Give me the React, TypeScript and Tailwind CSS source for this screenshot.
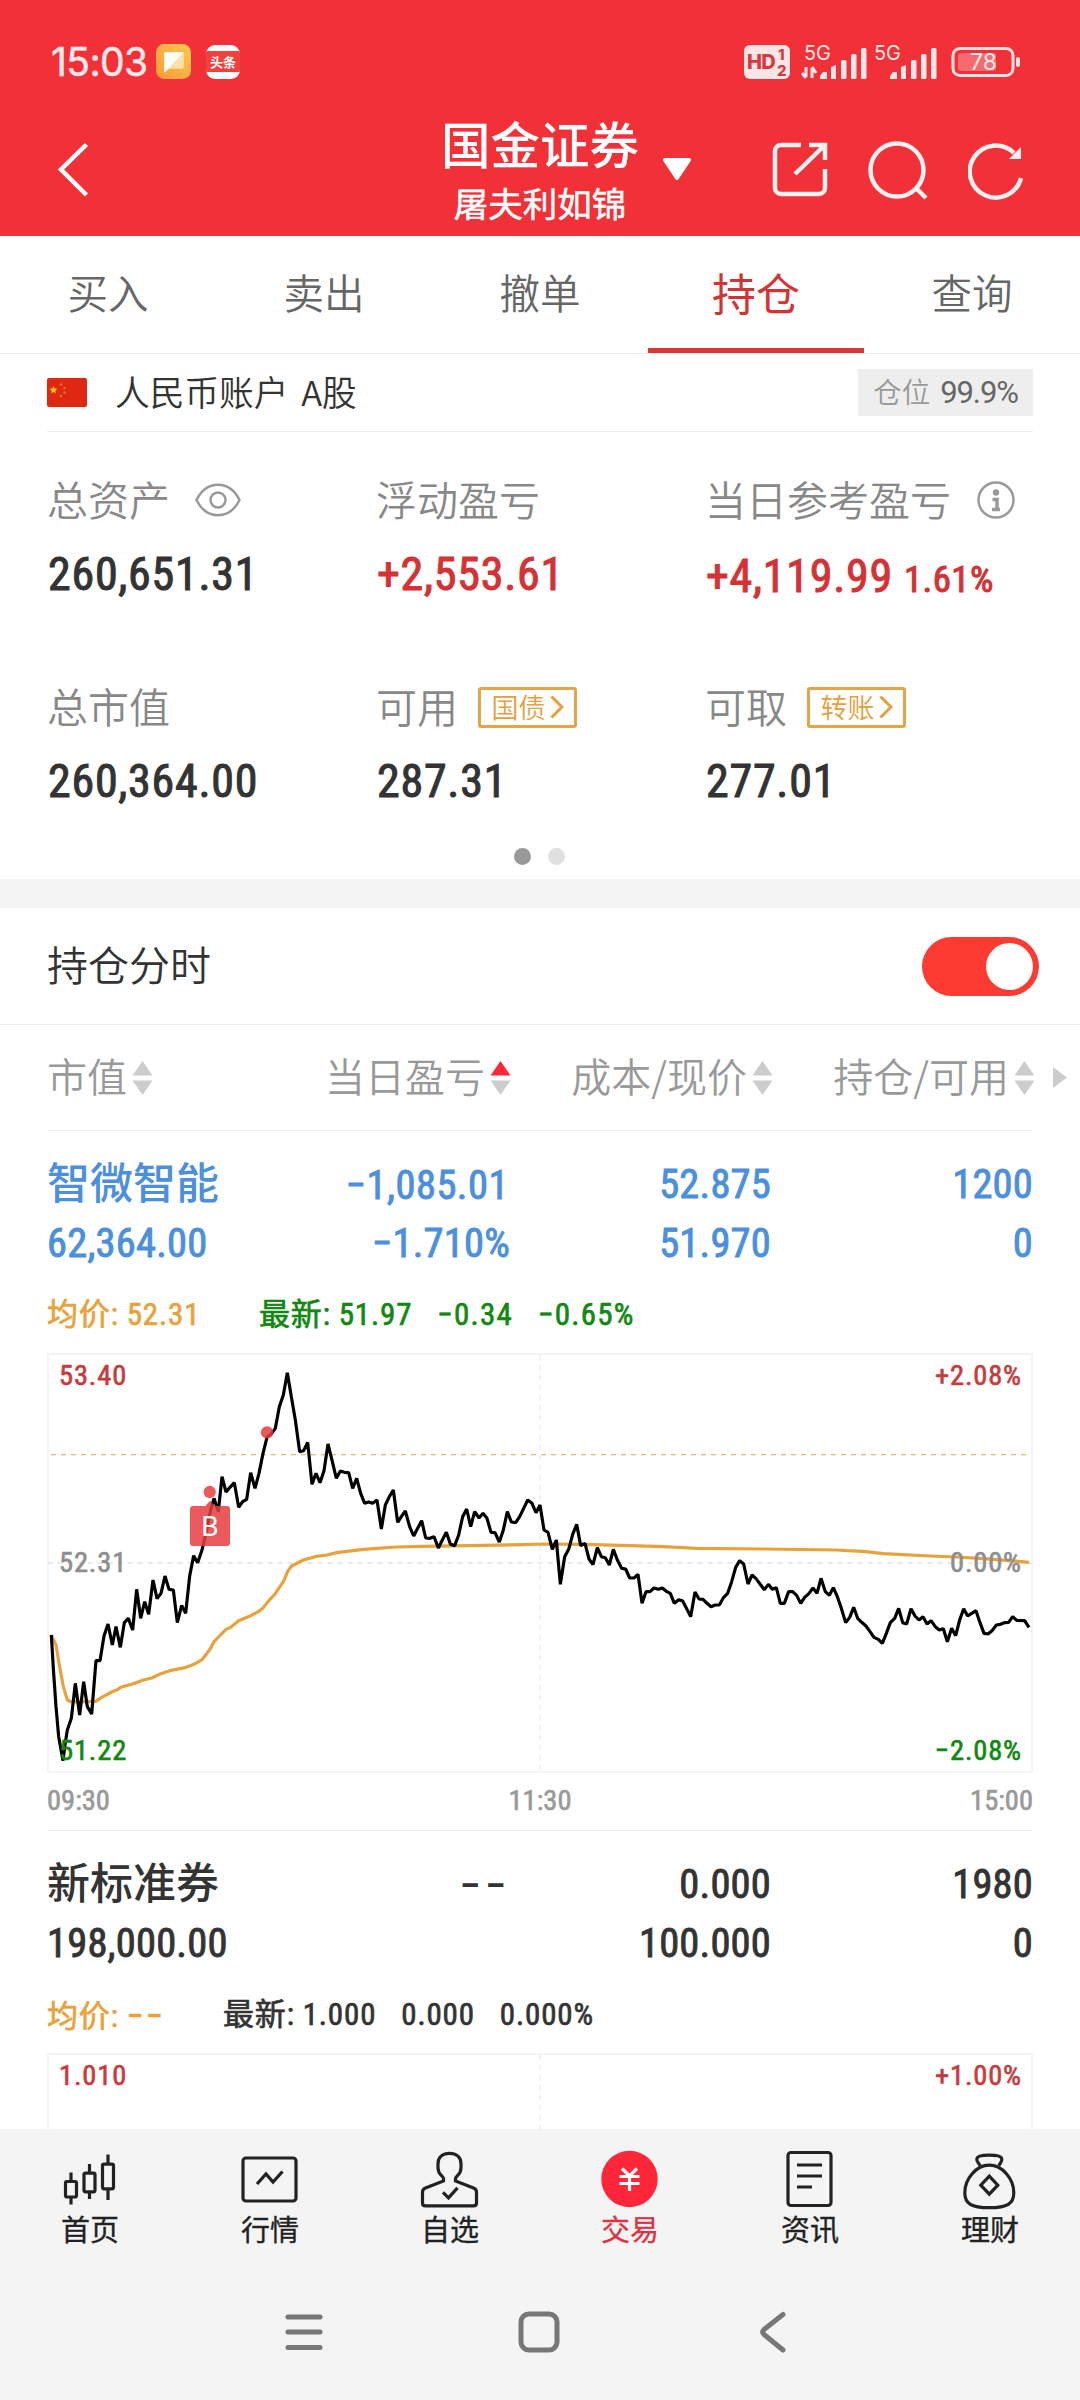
import type { ReactNode } from "react";
import { clsx } from "clsx";

const TABS = ["买入", "卖出", "撤单", "持仓", "查询"];

// chart coordinates share one space: x 51..3009, y 39..1299
const PRICE_LINE =
  "64,885 70,985 78,1100 86,1190 99,1262 105,1215 112,1170 124,1135 136,1030 149,1125 161,1025 172,1100 185,1122 198,962 210,962 222,888 234,852 247,915 258,860 271,922 283,848 295,835 308,870 320,748 332,835 344,785 356,823 369,720 381,776 393,760 405,708 417,748 430,750 442,848 455,796 467,820 479,708 491,647 503,668 516,630 530,570 542,510 552,475 565,515 576,410 588,456 600,442 613,428 626,502 638,485 650,478 662,398 675,445 687,400 699,340 711,292 723,283 736,265 748,200 760,165 772,98 784,170 796,240 809,335 821,332 833,307 846,433 858,400 870,428 882,392 894,312 907,365 919,415 931,393 943,397 956,398 968,445 980,415 992,460 1004,490 1016,486 1028,490 1041,480 1054,567 1066,495 1078,470 1090,450 1103,547 1114,530 1126,513 1139,560 1151,588 1163,565 1175,542 1187,594 1200,595 1212,590 1225,624 1237,600 1249,577 1261,612 1274,617 1286,585 1298,530 1310,507 1322,560 1334,515 1347,534 1359,520 1371,535 1383,577 1395,578 1408,606 1420,570 1432,515 1444,546 1457,548 1469,530 1481,505 1493,480 1506,490 1518,518 1530,495 1542,570 1554,577 1567,628 1579,600 1591,733 1604,650 1616,628 1628,583 1640,553 1652,617 1665,610 1677,657 1689,674 1702,623 1714,650 1726,653 1738,675 1750,628 1762,660 1775,685 1787,687 1799,714 1812,714 1824,703 1836,790 1848,755 1860,755 1872,744 1885,748 1897,744 1909,754 1921,760 1933,790 1946,779 1958,783 1970,806 1982,830 1995,756 2007,777 2019,778 2031,790 2043,800 2056,795 2068,795 2081,772 2093,760 2105,725 2117,682 2129,662 2141,672 2154,732 2166,705 2178,716 2190,732 2203,749 2215,733 2227,748 2239,743 2251,790 2263,790 2276,755 2288,755 2300,766 2312,790 2324,772 2337,760 2349,744 2361,760 2373,715 2386,755 2398,766 2410,743 2422,770 2434,805 2447,848 2459,832 2471,802 2483,835 2495,847 2508,858 2520,875 2532,892 2545,898 2557,910 2569,880 2581,848 2594,835 2606,805 2618,848 2630,852 2643,806 2655,828 2667,840 2679,830 2691,852 2703,842 2716,860 2728,870 2740,866 2752,905 2765,865 2777,887 2789,840 2801,806 2813,828 2825,820 2838,812 2850,848 2862,880 2874,882 2886,872 2899,855 2911,853 2923,848 2936,847 2948,830 2960,841 2984,842 2997,862";

const AVERAGE_LINE =
  "64,885 78,915 88,975 100,1040 112,1080 125,1086 197,1084 215,1072 245,1056 262,1049 272,1042 310,1031 340,1020 365,1014 388,1003 420,992 468,982 492,973 516,959 540,928 552,905 588,868 602,862 626,842 660,828 688,813 700,803 712,787 735,762 748,743 762,722 773,694 785,678 820,660 855,650 890,645 920,638 1000,628 1041,625 1100,621 1180,619 1360,616 1480,614 1540,612 1660,613 1800,617 1900,620 2000,625 2200,627 2420,630 2450,632 2500,634 2560,641 2700,648 2780,651 2860,656 2940,662 2997,667";

function Num({ className, children }: { className?: string; children: ReactNode }) {
  return (
    <span
      className={clsx(
        "font-[Roboto,'Noto_Sans_CJK_SC',sans-serif] whitespace-pre font-stretch-[75%] [-webkit-text-stroke:0.022em_currentColor]",
        className,
      )}
    >
      {children}
    </span>
  );
}

function Dashes() {
  return <span className="font-[Inter,sans-serif] text-[1.18em] leading-none tracking-[0.07em]">--</span>;
}

function SignalBars({ x }: { x: number }) {
  return (
    <g fill="#ffe6e6">
      <path d={`M${x} 35v-3l3-4h4v7z`} />
      <path d={`M${x + 11} 35V23l5-2v14z`} />
      <rect x={x + 21} y="16" width="5.5" height="19" rx="1.5" />
      <rect x={x + 31} y="10" width="5.5" height="25" rx="1.5" />
      <rect x={x + 41} y="4" width="5.5" height="31" rx="1.5" />
    </g>
  );
}

function StatusBar() {
  return (
    <div className="flex h-[122px] items-center pt-px pr-[59px] pl-[51px]">
      <span className="w-[101px] font-[Inter,sans-serif] text-[39px] leading-none tracking-[-0.015em] whitespace-nowrap text-[#ffe9e9] [-webkit-text-stroke:0.5px_#ffe9e9]">
        15:03
      </span>
      <svg className="ml-1 size-[35px]" viewBox="0 0 34 34">
        <defs>
          <linearGradient id="note" x1="1" y1="0" x2="0" y2="1">
            <stop offset="0" stopColor="#ffc84d" />
            <stop offset="1" stopColor="#fb9a38" />
          </linearGradient>
        </defs>
        <rect width="34" height="34" rx="8" fill="url(#note)" />
        <path d="M9 8h17a1 1 0 0 1 1 1v13a2 2 0 0 1-2 2H13l-5 4V9a1 1 0 0 1 1-1z" fill="#ffe0a8" />
        <path d="M9 8h18L8 28V9a1 1 0 0 1 1-1z" fill="#fff" />
      </svg>
      <div className="ml-[15px] flex h-[34px] w-[34px] items-center overflow-hidden rounded-[9px] bg-white">
        <span className="flex h-[21px] w-full items-center justify-center bg-[#f4403c] pb-px text-[13px] leading-none font-bold text-white">
          头条
        </span>
      </div>

      <svg className="ml-auto h-[36px] w-[280px] overflow-visible" viewBox="0 0 280 36">
        <rect x="3" y="1" width="46" height="34" rx="6" fill="#ffe6e6" />
        <g fill="#d9383e" fontFamily="Inter, sans-serif" fontWeight="800">
          <text x="6" y="25" fontSize="20" letterSpacing="-0.8">HD</text>
          <text x="37" y="16" fontSize="15">1</text>
          <text x="36" y="32" fontSize="15">2</text>
        </g>
        <g fill="#ffe6e6" fontFamily="Inter, sans-serif" fontWeight="400" fontSize="20">
          <text x="63" y="16" textLength="27" lengthAdjust="spacingAndGlyphs">5G</text>
          <text x="133" y="16" textLength="27" lengthAdjust="spacingAndGlyphs">5G</text>
        </g>
        <path d="M65 23v10M65 34l-4-5M71 34V24M71 23l4 6" stroke="#ffe6e6" strokeWidth="3" fill="none" />
        <SignalBars x={79} />
        <SignalBars x={149} />
        <rect x="212" y="4.500" width="60" height="27" rx="7" fill="none" stroke="#ffe0e0" strokeWidth="3" />
        <rect x="217" y="9" width="38" height="18" rx="3" fill="#f76a6e" />
        <rect x="275" y="13" width="4" height="10" rx="2" fill="#ffe6e6" />
        <text x="242.500" y="26" textAnchor="middle" fill="#ffeaea" fontFamily="Inter, sans-serif" fontWeight="400" fontSize="23">78</text>
      </svg>
    </div>
  );
}

function Header() {
  return (
    <header className="h-[236px] bg-[#f23038] text-white">
      <StatusBar />
      <div className="grid h-[114px] grid-cols-[1fr_200px_1fr]">
        <svg className="mt-[20px] ml-[54px] h-[56px] w-[38px]" viewBox="0 0 38 56" fill="none" stroke="#fff" strokeWidth="4.500">
          <path d="M32.500 2.500L7 27.500L32.500 53" />
        </svg>
        <div className="flex flex-col items-center font-medium">
          <span className="-mt-[4px] text-[49.500px] leading-[50px] whitespace-nowrap">国金证券</span>
          <span className="mt-[12px] text-[34.500px] leading-[45px] font-normal whitespace-nowrap [-webkit-text-stroke:0.5px_white]">屠夫利如锦</span>
        </div>
        <div className="flex pt-[20px] pl-[21px]">
          <svg className="mt-[14px] h-[27px] w-[32px]" viewBox="0 0 32 27">
            <path d="M4 4H28L16 22Z" fill="#fff" stroke="#fff" strokeWidth="4" strokeLinejoin="round" />
          </svg>
          <svg className="ml-[79px] h-[56px] w-[56px]" viewBox="0 0 56 56" fill="none" stroke="#fff0f0" strokeWidth="4.500">
            <path d="M29 3H9a6 6 0 0 0-6 6V46a6 6 0 0 0 6 6H47a6 6 0 0 0 6-6V27" />
            <path d="M37 3H53V18M53 3L23 32" />
          </svg>
          <svg className="-mt-[3px] ml-[40px] h-[62px] w-[62px]" viewBox="0 0 62 62" fill="none" stroke="#fff0f0" strokeWidth="4.500">
            <ellipse cx="29" cy="31" rx="26.500" ry="26.500" />
            <path d="M48 49l10 10" />
          </svg>
          <svg className="-mt-px ml-[38px] h-[60px] w-[58px]" viewBox="0 0 58 60" fill="none" stroke="#fff0f0" strokeWidth="4.500">
            <path d="M53 37A26 26 0 1 1 46 12" />
            <path d="M53 6V18H41Z" fill="#fff0f0" stroke="none" />
          </svg>
        </div>
      </div>
    </header>
  );
}

function SortArrows({ active }: { active?: boolean }) {
  return (
    <svg className="mt-[5px] ml-[5px] h-[34px] w-[21px] shrink-0" viewBox="0 0 21 34">
      <path d="M0.500 14.500L10.500 0L20.500 14.500Z" fill={active ? "#fe2638" : "#ccc"} />
      <path d="M0.500 19.500L10.500 34L20.500 19.500Z" fill="#ccc" />
    </svg>
  );
}

function Stat({ label, extra, children }: { label: string; extra?: ReactNode; children: ReactNode }) {
  return (
    <div className="h-[207px] w-[329px] shrink-0">
      <div className="flex h-[60px] items-center">
        <span className="pb-[4px] text-[41px] leading-none font-[350] whitespace-nowrap text-[#888]">{label}</span>
        {extra}
      </div>
      <div className="flex h-[88px] items-center pl-px text-[46px] leading-none tracking-[0.016em] whitespace-nowrap">{children}</div>
    </div>
  );
}

function Tag({ children }: { children: string }) {
  return (
    <span className="ml-[20px] flex h-[41px] w-[99px] items-center justify-center gap-1 rounded-[3px] border-[3px] border-[#e3a548] text-[27px] leading-none font-[350] text-[#e3a03c]">
      <span className="pb-[2px]">{children}</span>
      <svg className="h-[24px] w-[14px]" viewBox="0 0 14 24" fill="none" stroke="currentColor" strokeWidth="3">
        <path d="M1.500 1.500L12 12L1.500 22.500" />
      </svg>
    </span>
  );
}

function AccountSummary() {
  return (
    <section className="h-[525px]">
      <div className="mx-[47px] flex h-[78px] items-center border-b border-[#ececec]">
        <svg className="h-[29px] w-[40px]" viewBox="0 0 40 29">
          <rect width="40" height="29" rx="2" fill="#de2812" />
          <path d="M6.500 8l1.100 2.600 2.900.2-2.200 1.900.7 2.800-2.500-1.500-2.500 1.500.7-2.800-2.200-1.900 2.900-.2z" fill="#ffc81e" />
          <g fill="#e87828">
            <circle cx="14" cy="6.500" r="1.200" />
            <circle cx="17.500" cy="10" r="1.200" />
            <circle cx="17.500" cy="14.500" r="1.200" />
            <circle cx="14" cy="18" r="1.200" />
          </g>
        </svg>
        <span className="ml-[28px] pb-[3px] text-[34.700px] leading-none font-[350] whitespace-pre text-[#333] [word-spacing:5px]">人民币账户 A股</span>
        <div className="ml-auto flex h-[47px] w-[175px] items-center justify-center gap-[10px] bg-[#eee] text-[28.500px] leading-none font-[350] text-[#999]">
          <span className="pb-[3px]">仓位</span>
          <span className="font-[Roboto,sans-serif] text-[31px] font-normal tracking-[-0.035em] text-[#666]">99.9%</span>
        </div>
      </div>

      <div className="flex flex-wrap pt-[38px] pl-[47px]">
        <Stat
          label="总资产"
          extra={
            <svg className="ml-[25px] h-[34px] w-[46px]" viewBox="0 0 46 34" fill="none" stroke="#999" strokeWidth="2.500">
              <path d="M1.500 17C6 8 13 1.800 23 1.800S40 8 44.500 17C40 26 33 32.200 23 32.200S6 26 1.500 17Z" />
              <circle cx="23" cy="17" r="7.500" />
            </svg>
          }
        >
          <Num className="text-[#333]">260,651.31</Num>
        </Stat>
        <Stat label="浮动盈亏">
          <Num className="text-[#d43235]">+2,553.61</Num>
        </Stat>
        <Stat
          label="当日参考盈亏"
          extra={
            <svg className="ml-[26px] size-[38px] shrink-0" viewBox="0 0 38 38" fill="none" stroke="#999">
              <circle cx="19" cy="19" r="17.500" strokeWidth="2.500" />
              <circle cx="19" cy="11.500" r="3.200" fill="#999" stroke="none" />
              <path d="M15.500 18.500H20V28M15 28.500H23" strokeWidth="3.500" />
            </svg>
          }
        >
          <Num className="pt-1 text-[#d43235]">
            +4,119.99<span className="ml-[11px] text-[37px] tracking-[0.01em]">1.61%</span>
          </Num>
        </Stat>
        <Stat label="总市值">
          <Num className="text-[#333]">260,364.00</Num>
        </Stat>
        <Stat label="可用" extra={<Tag>国债</Tag>}>
          <Num className="text-[#333]">287.31</Num>
        </Stat>
        <Stat label="可取" extra={<Tag>转账</Tag>}>
          <Num className="text-[#333]">277.01</Num>
        </Stat>
      </div>

      <div className="-mt-[36px] flex justify-center gap-[17px] pr-px">
        <span className="size-[17px] rounded-full bg-[#999]" />
        <span className="size-[17px] rounded-full bg-[#e0e0e0]" />
      </div>
    </section>
  );
}

function TableHeader() {
  return (
    <div className="flex h-[105px] items-center pr-3 pb-[5px] pl-[47px] text-[40px] leading-none font-[350] text-[#999]">
      <div className="flex w-[150px] items-center">
        市值
        <SortArrows />
      </div>
      <div className="flex w-[314px] items-center justify-end">
        当日盈亏
        <SortArrows active />
      </div>
      <div className="flex w-[262px] items-center justify-end whitespace-nowrap">
        成本/现价
        <SortArrows />
      </div>
      <div className="flex w-[262px] items-center justify-end whitespace-nowrap">
        持仓/可用
        <SortArrows />
      </div>
      <svg className="mt-[5px] ml-[18px] h-[21px] w-[14px] shrink-0" viewBox="0 0 14 21">
        <path d="M0 0L14 10.500L0 21Z" fill="#ccc" />
      </svg>
    </div>
  );
}

interface Holding {
  name: string;
  value: string;
  pnl: [string, string];
  cost: [string, string];
  amount: [string, string];
  color: string;
}

function HoldingRow({ name, value, pnl, cost, amount, color }: Holding) {
  return (
    <div
      className={clsx(
        "grid h-[150px] grid-cols-[201px_262px_261px_262px] grid-rows-[60px_58px] pt-[23px] text-[40.500px] leading-none tracking-[0.005em] whitespace-nowrap",
        color,
      )}
    >
      <span className="self-center pb-[7px] text-[43px] font-medium tracking-normal">{name}</span>
      <span className="self-center text-right">
        {pnl[0] === "--" ? <Dashes /> : <Num className="mr-px tracking-[0.012em]">{pnl[0]}</Num>}
      </span>
      <Num className="self-center text-right">{cost[0]}</Num>
      <Num className="self-center text-right">{amount[0]}</Num>
      <Num className="self-center">{value}</Num>
      <Num className="self-center text-right">{pnl[1]}</Num>
      <Num className="self-center text-right">{cost[1]}</Num>
      <Num className="self-center text-right">{amount[1]}</Num>
    </div>
  );
}

function ChartFrame({ high, highPct, children }: { high: string; highPct: string; children?: ReactNode }) {
  return (
    <div className="relative h-[421px] text-[28.500px] leading-none tracking-[0.03em]">
      <svg className="absolute inset-0 h-[421px] w-[986px]" viewBox="51 39 2958 1263" fill="none">
        <rect x="54" y="42" width="2952" height="1254" stroke="#f3f3f3" strokeWidth="5" />
        <path d="M1530 45V1292" stroke="#f0f0f0" strokeWidth="5" strokeDasharray="15 15" />
        <path d="M53 669H3004" stroke="#e2e2e2" strokeWidth="5" strokeDasharray="15 15" />
        {children}
      </svg>
      <div className="relative flex justify-between px-[12px] pt-[9px] pr-[11px] text-[#c63c3c]">
        <Num>{high}</Num>
        <Num>{highPct}</Num>
      </div>
    </div>
  );
}

function IntradayChart() {
  return (
    <div className="relative">
      <ChartFrame high="53.40" highPct="+2.08%">
        <path d="M63 344H2997" stroke="#e0b878" strokeWidth="3.500" strokeDasharray="15 15" />
        <polyline points={AVERAGE_LINE} stroke="#e8a23c" strokeWidth="9.500" strokeLinejoin="round" />
        <polyline points={PRICE_LINE} stroke="#000" strokeWidth="9.500" strokeLinejoin="bevel" />
        <g fill="#e63c3f" fillOpacity="0.85">
          <circle cx="539" cy="456" r="18.500" />
          <circle cx="711" cy="277" r="18.500" />
          <path d="M526 498L540 482L554 498Z" />
          <rect x="480" y="498" width="120" height="120" rx="9" />
        </g>
        <text x="540" y="588" textAnchor="middle" fill="#fff" fontFamily="Roboto, sans-serif" fontSize="84" letterSpacing="0">B</text>
      </ChartFrame>
      <div className="absolute top-[196px] right-[11px] left-[12px] flex justify-between text-[28.500px] leading-none tracking-[0.03em] text-[#8e8e8e]">
        <Num>52.31</Num>
        <Num>0.00%</Num>
      </div>
      <div className="absolute top-[384px] right-[11px] left-[12px] flex justify-between text-[28.500px] leading-none tracking-[0.03em] text-[#118811]">
        <Num>51.22</Num>
        <Num>−2.08%</Num>
      </div>
    </div>
  );
}

function Holdings() {
  return (
    <section className="px-[47px]">
      <div className="h-[700px] border-t border-[#ececec]">
        <HoldingRow
          name="智微智能"
          value="62,364.00"
          pnl={["−1,085.01", "−1.710%"]}
          cost={["52.875", "51.970"]}
          amount={["1200", "0"]}
          color="text-[#4c8fdc]"
        />
        <div className="flex h-[72px] items-center pb-[6px] text-[31px] leading-none tracking-[0.027em] whitespace-nowrap">
          <Num className="w-[212px] text-[#e8a23c]">均价: 52.31</Num>
          <div className="flex gap-[25px] text-[#118811]">
            <Num>最新: 51.97</Num>
            <Num className="tracking-[0.04em]">−0.34</Num>
            <Num className="tracking-[0.04em]">−0.65%</Num>
          </div>
        </div>
        <IntradayChart />
        <div className="flex h-[54px] items-center justify-between text-[28.500px] leading-none text-[#999]">
          <Num>09:30</Num>
          <Num>11:30</Num>
          <Num>15:00</Num>
        </div>
      </div>

      <div className="border-t border-[#ececec]">
        <HoldingRow
          name="新标准券"
          value="198,000.00"
          pnl={["--", ""]}
          cost={["0.000", "100.000"]}
          amount={["1980", "0"]}
          color="text-[#333]"
        />
        <div className="flex h-[72px] items-center pb-[6px] text-[31px] leading-none tracking-[0.027em] whitespace-nowrap text-[#333]">
          <Num className="w-[176px] text-[#e8a23c]">
            均价: <Dashes />
          </Num>
          <div className="flex gap-[25px]">
            <Num>最新: 1.000</Num>
            <Num>0.000</Num>
            <Num>0.000%</Num>
          </div>
        </div>
        <ChartFrame high="1.010" highPct="+1.00%" />
      </div>
    </section>
  );
}

const NAV_ITEMS: { label: string; active?: boolean; icon: ReactNode }[] = [
  {
    label: "首页",
    icon: (
      <>
        <rect x="5.500" y="31.500" width="11" height="15.500" rx="1.500" />
        <rect x="24" y="23.200" width="11" height="18.600" rx="1.500" />
        <rect x="42.500" y="14.200" width="11" height="24.600" rx="1.500" />
        <path d="M11 22.500V31M11 47V54.500M29.500 14V23M29.500 42V49M48 4.500V14M48 39V50" />
      </>
    ),
  },
  {
    label: "行情",
    icon: (
      <>
        <rect x="3" y="8" width="53" height="43" rx="3" />
        <path d="M17 34L26 24L33 32L42.500 21.500" />
      </>
    ),
  },
  {
    label: "自选",
    icon: (
      <g transform="translate(-0.5 0.9)">
        <path d="M24 27.500C24 25 18.500 24 18.500 17V13C18.500 6 23.500 2.500 30 2.500S41.500 6 41.500 13V17C41.500 24 36 25 36 27.500V30L54 37C56 38 57 39 57 41V52C57 54 56 55 54 55H6C4 55 3 54 3 52V41C3 39 4 38 6 37L24 30Z" />
        <path d="M23.500 41.500L29 47L38 37" />
      </g>
    ),
  },
  {
    label: "交易",
    active: true,
    icon: (
      <>
        <circle cx="29.500" cy="29" r="28.200" fill="#fe2638" stroke="none" />
        <path d="M22 18.500L29.500 26L37 18.500M19.500 26.500H39.500M19.500 33.500H39.500M29.500 26V41" stroke="#fff" strokeWidth="3.200" />
      </>
    ),
  },
  {
    label: "资讯",
    icon: (
      <>
        <rect x="8" y="2.500" width="43" height="53" rx="3" />
        <path d="M17 15H42M17 26H42M17 37H32" />
      </>
    ),
  },
  {
    label: "理财",
    icon: (
      <g transform="translate(-0.700 0.700)">
        <path d="M21 15C19 12 17 11 17.500 8C18 5 24 4.500 30 4.500S42 5 42.500 8C43 11 41 12 39.500 15" />
        <path d="M30 14.500C43 14.500 54.500 28 54.500 42C54.500 53 48 57 30 57S5.500 53 5.500 42C5.500 28 17 14.500 30 14.500Z" />
        <path d="M30 25.500L38.500 34.500L30 43.500L21.500 34.500Z" />
      </g>
    ),
  },
];

function BottomNav() {
  return (
    <nav className="grid h-[125px] grid-cols-6 bg-[#f4f4f4] pt-[21px]">
      {NAV_ITEMS.map((item) => (
        <div key={item.label} className="flex flex-col items-center">
          <svg className="h-[60px] w-[60px]" viewBox="0 0 60 60" fill="none" stroke="#222" strokeWidth="3.2">
            {item.icon}
          </svg>
          <span
            className={clsx(
              "mt-[2px] text-[29px] leading-[32px] [-webkit-text-stroke:0.3px_currentColor]",
              item.active ? "text-[#e03040]" : "text-[#222]",
            )}
          >
            {item.label}
          </span>
        </div>
      ))}
    </nav>
  );
}

function SystemNav() {
  return (
    <div className="flex h-[146px] justify-center gap-[192px] bg-[#f4f4f4] pt-[57px] pr-[2px]">
      <svg className="h-[42px] w-[42px]" viewBox="0 0 42 42" stroke="#777" strokeWidth="5" strokeLinecap="round">
        <path d="M4 6H36M4 21H36M4 36.500H36" />
      </svg>
      <svg className="h-[42px] w-[42px]" viewBox="0 0 42 42" fill="none" stroke="#777" strokeWidth="5">
        <rect x="3" y="3" width="36" height="36" rx="8" />
      </svg>
      <svg className="h-[42px] w-[42px]" viewBox="0 0 42 42" fill="none" stroke="#777" strokeWidth="5" strokeLinecap="round" strokeLinejoin="round">
        <path d="M31 3.500L12 18.500Q9.500 21 12 23.500L31 39" />
      </svg>
    </div>
  );
}

export default function App() {
  return (
    <div className="flex h-[2400px] w-[1080px] flex-col overflow-hidden bg-white font-['Noto_Sans_CJK_SC',sans-serif]">
      <Header />

      <div className="grid h-[118px] grid-cols-5 border-b border-[#ececec]">
        {TABS.map((tab) => (
          <div
            key={tab}
            className={clsx(
              "flex items-center justify-center leading-none",
              tab === "持仓"
                ? "border-b-[5px] border-[#d93839] text-[44px] text-[#d43235]"
                : "pb-[4px] text-[40.500px] font-[350] text-[#666]",
            )}
          >
            {tab}
          </div>
        ))}
      </div>

      <AccountSummary />
      <div className="h-[29px] bg-[#f4f4f4]" />

      <div className="flex h-[117px] items-center justify-between border-b border-[#ececec] pr-[41px] pl-[47px]">
        <span className="pb-[5px] text-[41px] leading-none font-[350] text-[#333]">持仓分时</span>
        <div className="flex h-[59px] w-[117px] items-center justify-end rounded-full bg-[#fb3b32] pr-[6px]">
          <span className="size-[47px] rounded-full bg-white" />
        </div>
      </div>

      <TableHeader />
      <div className="min-h-0 flex-1 overflow-hidden">
        <Holdings />
      </div>
      <BottomNav />
      <SystemNav />
    </div>
  );
}
